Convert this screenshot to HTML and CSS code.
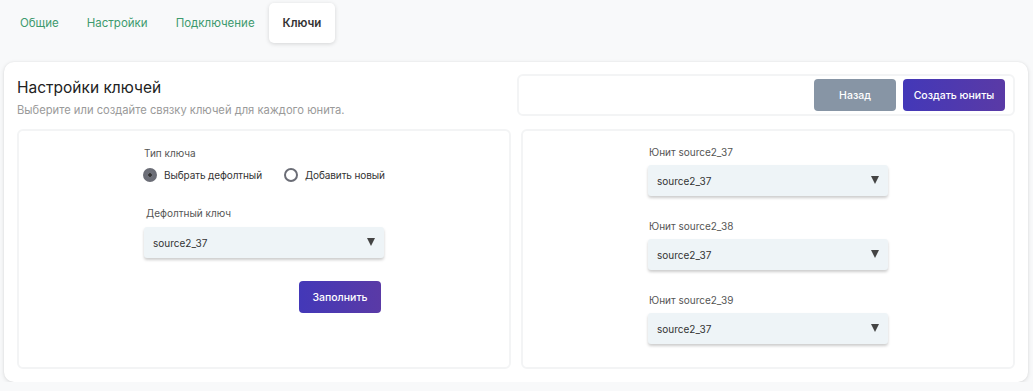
FILE: index.html
```html
<!DOCTYPE html>
<html>
<head>
  <title>Ключи</title>
  <link rel="stylesheet" href="styles.css">
</head>
<body>
  <div class="tabs">
    <div class="tab">Общие</div>
    <div class="tab">Настройки</div>
    <div class="tab">Подключение</div>
    <div class="tab active">Ключи</div>
  </div>

  <div class="card">
    <div class="card-top">
      <div class="heading">
        <h1>Настройки ключей</h1>
        <p>Выберите или создайте связку ключей для каждого юнита.</p>
      </div>
      <div class="actions">
        <button class="btn gray">Назад</button>
        <button class="btn purple">Создать юниты</button>
      </div>
    </div>

    <div class="panels">
      <div class="panel">
        <div class="form">
          <div class="label">Тип ключа</div>
          <div class="radios">
            <label class="radio"><span class="dot checked"></span>Выбрать дефолтный</label>
            <label class="radio"><span class="dot"></span>Добавить новый</label>
          </div>
          <div class="label default">Дефолтный ключ</div>
          <div class="select"><span>source2_37</span><span class="arrow"></span></div>
          <div class="fill-row">
            <button class="btn purple">Заполнить</button>
          </div>
        </div>
      </div>

      <div class="panel">
        <div class="form units">
          <div class="group">
            <div class="label">Юнит source2_37</div>
            <div class="select"><span>source2_37</span><span class="arrow"></span></div>
          </div>
          <div class="group">
            <div class="label">Юнит source2_38</div>
            <div class="select"><span>source2_37</span><span class="arrow"></span></div>
          </div>
          <div class="group">
            <div class="label">Юнит source2_39</div>
            <div class="select"><span>source2_37</span><span class="arrow"></span></div>
          </div>
        </div>
      </div>
    </div>
  </div>
</body>
</html>
```

FILE: styles.css
```css
body {
  margin: 0; font-family: Inter, 'Noto Sans', sans-serif;
  background: #f8f9fa; color: #222;
}
.tabs {
  display: flex; padding: 3px 0 0 6px;
  height: 40px;
}
.tab {
  padding: 0 14px; height: 40px;
  display: flex; align-items: center;
  font-size: 11.5px; color: #3e9a6e;
}
.tab.active {
  background: #fff; color: #333; font-weight: 600;
  border-radius: 5px;
  box-shadow: 0 1px 4px rgba(0, 0, 0, 0.15);
}
.card {
  margin: 19px 5px 0 4px; padding: 12px 13px 13px;
  background: #fff; border-radius: 10px;
  box-shadow: 0 1px 4px rgba(0, 0, 0, 0.12), 0 0 2px rgba(0, 0, 0, 0.05);
}
.card-top {
  display: flex; justify-content: space-between;
  height: 42px;
}
.heading h1 {
  margin: 4px 0 0; font-size: 15.5px; font-weight: 400;
  color: #222;
}
.heading p {
  margin: 6px 0 0; font-size: 11.2px; color: #9a9a9a;
}
.actions {
  padding: 0 8px;
  display: flex; justify-content: flex-end; align-items: center; gap: 7px;
  border: 2px solid #f3f4f5; border-radius: 6px;
  box-sizing: border-box; width: 498px;
}
.btn {
  height: 32px; border: none; border-radius: 4px;
  font-family: inherit; font-size: 10.5px; font-weight: 500; color: #fff;
}
.btn.gray {
  width: 82px; background: #8795a5;
}
.btn.purple {
  width: 102px;
  background: linear-gradient(to right, #4338b8, #5a3aa6);
}
.panels {
  display: flex; gap: 10px; margin-top: 13px;
}
.panel {
  flex: 1; height: 240px; box-sizing: border-box;
  border: 2px solid #f3f4f5; border-radius: 6px;
  display: flex; justify-content: center;
}
.form {
  width: 240px; padding-top: 16px;
}
.form.units {
  padding-top: 15px;
}
.label {
  font-size: 10px; color: #555; height: 14px;
  white-space: nowrap;
}
.radios {
  display: flex; gap: 22px; margin-top: 7px; margin-left: -1px;
  white-space: nowrap;
}
.radio {
  display: flex; align-items: center; gap: 7px;
  font-size: 10px; letter-spacing: -0.1px; color: #333;
}
.dot {
  width: 14px; height: 14px; box-sizing: border-box;
  border: 2px solid #6b6d76; border-radius: 50%;
  background: #fff;
}
.dot.checked {
  background: radial-gradient(circle, #333 0 1.5px, #6d6f78 2px);
}
.label.default {
  margin-top: 25px; margin-left: 2px;
}
.select {
  margin-top: 6px; height: 31px; padding: 0 9px;
  background: #eef4f7; border-radius: 3px;
  display: flex; align-items: center; justify-content: space-between;
  font-size: 10px; color: #333;
  box-shadow: 0 2px 3px rgba(0, 0, 0, 0.2);
}
.units .select {
  margin-top: 5px;
}
.arrow {
  width: 0; height: 0; margin-top: -2px;
  border-left: 4px solid transparent; border-right: 4px solid transparent;
  border-top: 8px solid #444;
}
.fill-row {
  display: flex; justify-content: flex-end;
  margin-top: 23px; padding-right: 3px;
}
.fill-row .btn { width: 82px; }
.group + .group {
  margin-top: 24px;
}
.group .label { margin-left: 1px; }
```
